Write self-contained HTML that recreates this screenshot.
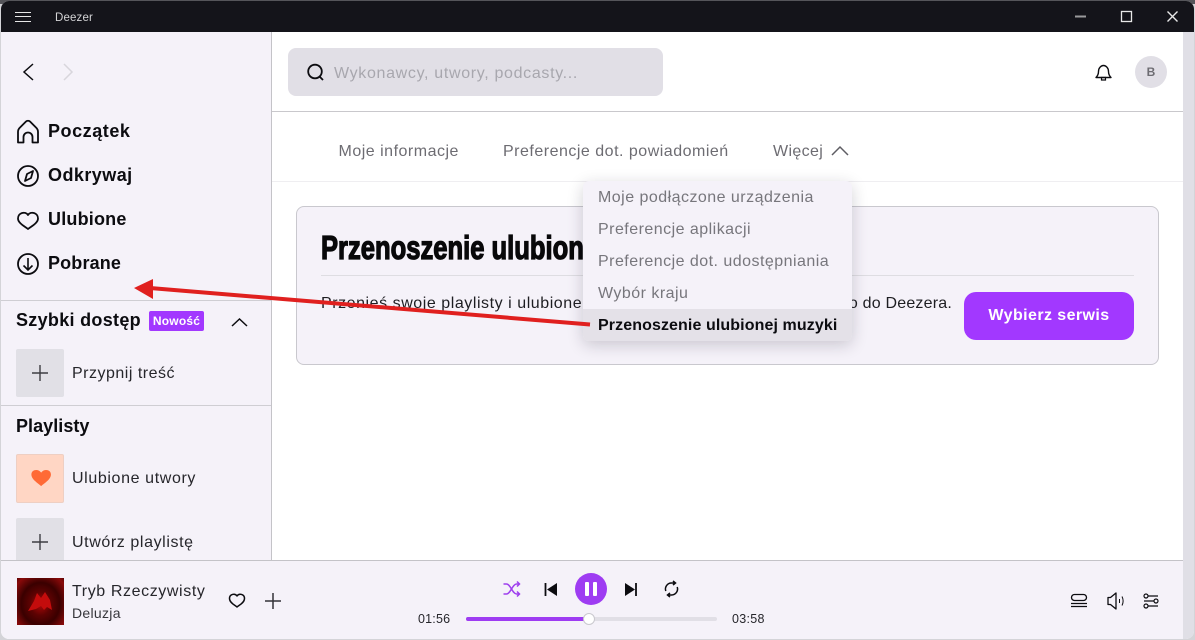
<!DOCTYPE html>
<html lang="pl"><head><meta charset="utf-8"><title>Deezer</title>
<style>
*{box-sizing:border-box}
html,body{margin:0;padding:0;width:1195px;height:640px;overflow:hidden;background:#d4d4d8}
body{font-family:"Liberation Sans",sans-serif;position:relative;color:#111}
.a{position:absolute}
.t{position:absolute;white-space:nowrap;line-height:20px;height:20px}
#win{position:absolute;left:1px;top:1px;width:1193px;height:638px;border-radius:8px;overflow:hidden;background:#fff}
svg{position:absolute;overflow:visible}
.nav{font-size:18px;font-weight:700;letter-spacing:.45px;color:#0c0c10}
.row{font-size:16px;letter-spacing:.55px;color:#26262b}
.tab{font-size:16px;letter-spacing:.5px;color:#6d6c72}
.dd{font-size:16px;letter-spacing:.47px;color:#77767c;left:15px}
</style></head><body>
<div class="a" style="left:0;top:0;width:1195px;height:4px;background:#55555a"></div>
<div id="win">
<div class="a" style="left:0;top:0;width:1193px;height:31px;background:#14141a"></div>
<div class="a" style="left:14px;top:11px;width:16px;height:1px;background:#e6e6e6"></div>
<div class="a" style="left:14px;top:15px;width:16px;height:1px;background:#e6e6e6"></div>
<div class="a" style="left:14px;top:20px;width:16px;height:1px;background:#e6e6e6"></div>
<div class="t" style="left:54px;top:7px;font-size:11.5px;letter-spacing:.15px;color:#d4d4d6">Deezer</div>
<svg style="left:0;top:0" width="1193" height="32" fill="none" stroke="#e8e8e8">
<path d="M1074 15.500h11" stroke="#9a9a9c" stroke-width="2"/>
<rect x="1120.500" y="10.500" width="10" height="10" stroke-width="1.300"/>
<path d="M1166.500 10.500l10 10M1176.500 10.500l-10 10" stroke-width="1.400"/></svg>

<!-- scrollbar strip -->
<div class="a" style="left:1182px;top:31px;width:11px;height:607px;background:#e0dfe6"></div>

<!-- sidebar -->
<div class="a" style="left:0;top:31px;width:271px;height:528px;background:#f5f2f9;border-right:1px solid #c4c3c8"></div>
<svg style="left:0;top:0" width="271" height="560" fill="none" stroke="#0c0c10" stroke-width="1.700">
<path d="M32 63l-9 8 9 8" stroke-width="1.500"/>
<path d="M63 63l8 8-8 8" stroke="#d8d6dc" stroke-width="1.500"/>
<path d="M17 141.500V131c0-2 .7-3.300 2-4.500l6-6c1-1 3-1 4 0l6 6c1.300 1.200 2 2.500 2 4.500v10.500h-5.500V136a4.500 4.500 0 0 0-9 0v5.500z" stroke-width="1.800" stroke-linejoin="round"/>
<circle cx="27" cy="175" r="10" stroke-width="1.800"/>
<path d="M32 170l-2 7-6 3 2-7z" stroke-width="1.800" stroke-linejoin="round"/>
<path d="M27 228c-2-2-10-5.500-10-10.500 0-6 7.500-7.500 10-3.500 2.500-4 10-2.500 10 3.500 0 5-8 8.500-10 10.500z" stroke-width="1.800" stroke-linejoin="round"/>
<circle cx="27" cy="263" r="10" stroke-width="1.800"/>
<path d="M27 257v11.500M22.500 264.500l4.500 4.500 4.500-4.500" stroke-width="1.600"/>
<path d="M231 325l7.500-7 7.500 7" stroke-width="1.500"/>
</svg>
<div class="t nav" style="left:47px;top:120px;letter-spacing:.55px">Początek</div>
<div class="t nav" style="left:47px;top:164px">Odkrywaj</div>
<div class="t nav" style="left:47px;top:208px;letter-spacing:.2px">Ulubione</div>
<div class="t nav" style="left:47px;top:252px;letter-spacing:.15px">Pobrane</div>
<div class="a" style="left:0;top:299px;width:270px;height:1px;background:#cfced3"></div>
<div class="t nav" style="left:15px;top:309px;letter-spacing:.3px">Szybki dostęp</div>
<div class="t" style="left:148px;top:310px;width:55px;height:20px;border-radius:2px;background:#a238ff;color:#fff;font-size:12px;font-weight:700;letter-spacing:.2px;text-align:center">Nowość</div>
<div class="a" style="left:15px;top:348px;width:48px;height:48px;border-radius:2px;background:#e1e0e6"></div>
<svg style="left:15px;top:348px" width="48" height="48" fill="none" stroke="#3d3d42" stroke-width="1.400"><path d="M24 16v16M16 24h16"/></svg>
<div class="t row" style="left:71px;top:363px;letter-spacing:.5px">Przypnij treść</div>
<div class="a" style="left:0;top:404px;width:270px;height:1px;background:#cfced3"></div>
<div class="t nav" style="left:15px;top:415px;letter-spacing:.05px">Playlisty</div>
<div class="a" style="left:15px;top:453px;width:48px;height:49px;border-radius:2px;background:#ffd6c4;border:1px solid #eecfc3"></div>
<svg style="left:28px;top:468px" width="24" height="20"><path d="M12 19C9 16 1.500 12 1.500 6.500 1.500 1 9 0 12 4.500 15 0 22.500 1 22.500 6.500 22.500 12 15 16 12 19z" fill="#ff6a36" transform="translate(1 -.5) scale(.93)"/></svg>
<div class="t row" style="left:71px;top:468px;letter-spacing:.62px">Ulubione utwory</div>
<div class="a" style="left:15px;top:517px;width:48px;height:42px;border-radius:2px 2px 0 0;background:#e1e0e6"></div>
<svg style="left:15px;top:517px" width="48" height="42" fill="none" stroke="#3d3d42" stroke-width="1.400"><path d="M24 16v16M16 24h16"/></svg>
<div class="t row" style="left:71px;top:532px;letter-spacing:.6px">Utwórz playlistę</div>

<!-- top header -->
<div class="a" style="left:287px;top:47px;width:375px;height:48px;border-radius:8px;background:#e1dfe6"></div>
<svg style="left:0;top:0" width="1193" height="120" fill="none" stroke="#0c0c10" stroke-width="1.800">
<circle cx="314" cy="70.500" r="6.800"/><path d="M319 76l3 3"/>
<path d="M1095 76.500c2-2 2.500-3.500 2.500-6 0-3.500 2.500-6 5-6s5 2.500 5 6c0 2.500.5 4 2.500 6z" stroke-width="1.400" stroke-linejoin="round"/>
<path d="M1100.500 76.500h4v2.500h-4z" stroke-width="1.200"/>
</svg>
<div class="t" style="left:333px;top:63px;font-size:16px;letter-spacing:.67px;color:#a8a7ae">Wykonawcy, utwory, podcasty...</div>
<div class="a" style="left:1134px;top:55px;width:32px;height:32px;border-radius:50%;background:#e1dfe6;color:#6d6c72;font-size:12px;font-weight:700;line-height:32px;text-align:center">B</div>
<div class="a" style="left:271px;top:110px;width:911px;height:1px;background:#c9c8cc"></div>

<!-- tabs -->
<div class="t tab" style="left:337.500px;top:141px">Moje informacje</div>
<div class="t tab" style="left:502px;top:141px">Preferencje dot. powiadomień</div>
<div class="t tab" style="left:772px;top:141px;letter-spacing:.35px">Więcej</div>
<svg style="left:830px;top:143px" width="20" height="14" fill="none" stroke="#5e5d63" stroke-width="1.500"><path d="M1 11l8-8 8 8"/></svg>
<div class="a" style="left:271px;top:180px;width:911px;height:1px;background:#efeef1"></div>

<!-- card -->
<div class="a" style="left:295px;top:205px;width:863px;height:159px;border-radius:8px;background:#f5f2f9;border:1px solid #c9c8ce"></div>
<div class="t" style="left:320px;top:228px;height:38px;line-height:38px;font-size:33px;font-weight:700;color:#08080a;transform-origin:0 50%;transform:scaleX(.775);-webkit-text-stroke:1.300px #08080a">Przenoszenie ulubionej muzyki</div>
<div class="a" style="left:320px;top:274px;width:813px;height:1px;background:#dedde2"></div>
<div class="t" style="left:320px;top:293px;font-size:16px;letter-spacing:.55px;color:#1e1e22">Przenieś swoje playlisty i ulubione utwory</div>
<div class="t" style="right:242px;top:293px;font-size:16px;letter-spacing:.2px;color:#1e1e22">o do Deezera.</div>
<div class="a" style="left:963px;top:291px;width:170px;height:48px;border-radius:12px;background:#a238ff;color:#fff;font-size:16px;font-weight:700;letter-spacing:.42px;line-height:48px;text-align:center">Wybierz serwis</div>

<!-- dropdown -->
<div class="a" style="left:582px;top:180px;width:269px;height:160px;border-radius:6px;background:#f5f2f9;box-shadow:0 4px 16px rgba(30,25,45,.2);overflow:hidden">
<div class="t dd" style="top:7px">Moje podłączone urządzenia</div>
<div class="t dd" style="top:39px">Preferencje aplikacji</div>
<div class="t dd" style="top:71px">Preferencje dot. udostępniania</div>
<div class="t dd" style="top:103px">Wybór kraju</div>
<div class="a" style="left:0;top:128px;width:269px;height:32px;background:#e4e1e8"></div>
<div class="t dd" style="top:135px;color:#0c0c10;font-weight:700;letter-spacing:.1px">Przenoszenie ulubionej muzyki</div>
</div>

<!-- player -->
<div class="a" style="left:0;top:559px;width:1182px;height:79px;background:#f5f2f9;border-top:1px solid #c4c3c8"></div>
<div class="a" style="left:16px;top:577px;width:47px;height:47px;background:radial-gradient(ellipse at 50% 55%,#b00808 0,#5c0202 32%,#3a0000 58%,#8a0a0a 88%,#5c0404 100%)"></div>
<svg style="left:16px;top:577px" width="47" height="47"><path d="M11 33l6-10 3-8 4 5 4-6 5 8 2 10-5-3-3 3-3-4-5 3z" fill="#c40c0c"/></svg>
<div class="t" style="left:71px;top:581px;font-size:16px;letter-spacing:.6px;color:#26262b">Tryb Rzeczywisty</div>
<div class="t" style="left:71px;top:602px;font-size:14px;letter-spacing:.3px;color:#36363b">Deluzja</div>
<svg style="left:0;top:0" width="1193" height="638" fill="none" stroke="#0c0c10" stroke-width="1.500">
<path d="M236 606c-1.500-1.500-7.500-4-7.500-8.500 0-4.500 5.500-5.500 7.500-2.500 2-3 7.500-2 7.500 2.500 0 4.500-6 7-7.500 8.500z" stroke-linejoin="round"/>
<path d="M272 592v16M264 600h16" stroke="#333338"/>
<!-- shuffle -->
<path d="M502.500 583h3c4 0 6 10 10 10h2.500M502.500 593h3c4 0 6-10 10-10h2.500M516 580.500l2.500 2.500-2.500 2.500M516 590.500l2.500 2.500-2.500 2.500" stroke="#9e3fee" stroke-width="1.500"/>
<!-- prev -->
<path d="M544.500 582v13" stroke-width="1.800"/><path d="M556 582v13l-10-6.500z" fill="#0c0c10" stroke="none"/>
<!-- next -->
<path d="M635 582v13" stroke-width="1.800"/><path d="M624 582v13l10-6.500z" fill="#0c0c10" stroke="none"/>
<!-- repeat -->
<path d="M664.800 590a6 6 0 0 1 5.700-8h3M672 580l2.500 2-2.500 2M676.200 586a6 6 0 0 1-5.700 8h-3M669 596l-2.500-2 2.500-2" stroke-width="1.500"/>
<!-- right icons -->
<path d="M1070 602.500h16M1070 605.500h16" stroke-width="1.300"/><rect x="1070.500" y="593.500" width="15" height="6" rx="3" stroke-width="1.300"/>
<path d="M1107 596.500h2.500l5.500-4.500v16l-5.500-4.500H1107z" stroke-width="1.300" stroke-linejoin="round"/>
<path d="M1118.500 598v4M1121 595.500c1.500 3 1.500 6 0 9" stroke-width="1"/>
<path d="M1146.500 595h10.500M1143 600h10.500M1146.500 605h10.500" stroke-width="1.300"/>
<circle cx="1145" cy="595" r="2" stroke-width="1.200"/><circle cx="1155" cy="600" r="2" stroke-width="1.200"/><circle cx="1145" cy="605" r="2" stroke-width="1.200"/>
</svg>
<div class="a" style="left:574px;top:572px;width:32px;height:32px;border-radius:50%;background:#9e3cf2"></div>
<div class="a" style="left:584px;top:581px;width:4px;height:14px;background:#fff;border-radius:1px"></div>
<div class="a" style="left:592px;top:581px;width:4px;height:14px;background:#fff;border-radius:1px"></div>
<div class="t" style="left:417px;top:608px;font-size:12.500px;letter-spacing:.2px;color:#26262b">01:56</div>
<div class="t" style="left:731px;top:608px;font-size:12.500px;letter-spacing:.3px;color:#26262b">03:58</div>
<div class="a" style="left:465px;top:616px;width:251px;height:4px;border-radius:2px;background:#e1dfe6"></div>
<div class="a" style="left:465px;top:616px;width:124px;height:4px;border-radius:2px;background:#9e3cf2"></div>
<div class="a" style="left:582px;top:612px;width:12px;height:12px;border-radius:50%;background:#fff;border:1px solid #c9c8ce"></div>
</div>

<!-- red arrow -->
<svg class="a" style="left:0;top:0" width="1195" height="640">
<path d="M150 288L590 324.500" stroke="#e0201f" stroke-width="4" fill="none"/>
<path d="M134 288L153 279V299z" fill="#e0201f"/>
</svg>
</body></html>
